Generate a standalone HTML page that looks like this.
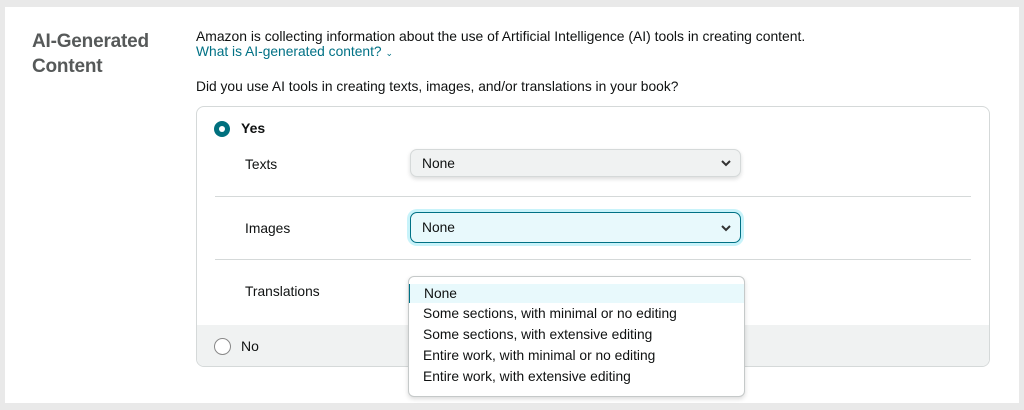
<!DOCTYPE html>
<html><head><style>
body{margin:0;width:1024px;height:410px;background:#e9e9e9;font-family:"Liberation Sans",Arial,sans-serif;color:#0f1111;position:relative;overflow:hidden}
.panel{position:absolute;left:5px;top:7px;width:1014px;height:396px;background:#fff}
.a{position:absolute;white-space:nowrap}
.title{left:32px;top:29px;font-size:19px;font-weight:bold;color:#565959;line-height:25px;letter-spacing:-0.2px}
.t{font-size:13.8px}
.card{position:absolute;left:196px;top:106px;width:792px;height:259px;border:1px solid #d5d9d9;border-radius:8px;background:#fff;overflow:hidden}
.no{position:absolute;left:0;top:218px;width:100%;height:42px;background:#f0f2f2}
.sel{position:absolute;left:213px;width:331px;height:28px;border:1px solid #d5d9d9;border-radius:7px;background:#f0f2f2;box-shadow:0 2px 4px rgba(15,17,17,.15);font-size:13.8px;line-height:28px;padding-left:11px;box-sizing:border-box}
.sel svg{position:absolute;right:9px;top:10px}
.hr{position:absolute;left:18px;width:756px;height:1px;background:#d5d9d9}
.dd{position:absolute;left:408px;top:276px;width:335px;height:119px;border:1px solid #c5c9c9;border-radius:6px;background:#fff;box-shadow:0 2px 5px rgba(0,0,0,.15);font-size:13.8px;overflow:hidden}
.dd div{height:21px;line-height:21px;padding-left:14px}
</style></head><body>
<div class="panel"></div>
<div class="a title">AI-Generated<br>Content</div>
<div class="a t" style="left:196px;top:28px;font-size:13.9px">Amazon is collecting information about the use of Artificial Intelligence (AI) tools in creating content.</div>
<div class="a t" style="left:196px;top:44px;color:#007185">What is AI-generated content? <span style="font-size:9px">&#8964;</span></div>
<div class="a t" style="left:196px;top:79px">Did you use AI tools in creating texts, images, and/or translations in your book?</div>
<div class="card">
 <div class="no"></div>
 <div class="a" style="left:17px;top:14px;width:16px;height:16px;border-radius:50%;background:#00707e"></div>
 <div class="a" style="left:22px;top:19px;width:6px;height:6px;border-radius:50%;background:#fff"></div>
 <div class="a" style="left:44px;top:13px;font-size:14px;font-weight:bold">Yes</div>
 <div class="a t" style="left:48px;top:50px">Texts</div>
 <div class="sel" style="top:42px">None<svg width="10" height="7"><path d="M1 1l4 4 4-4" stroke="#333" stroke-width="2" fill="none"/></svg></div>
 <div class="hr" style="top:89px"></div>
 <div class="a t" style="left:48px;top:114px">Images</div>
 <div class="sel" style="top:105px;height:31px;line-height:29px;background:#e8f9fc;border:1px solid #007185;box-shadow:0 0 0 3px #c8f3fa">None<svg width="10" height="7" style="top:12px"><path d="M1 1l4 4 4-4" stroke="#333" stroke-width="2" fill="none"/></svg></div>
 <div class="hr" style="top:152px"></div>
 <div class="a t" style="left:48px;top:177px">Translations</div>
 <div class="a" style="left:17px;top:231px;width:15px;height:15px;border-radius:50%;border:1px solid #888;background:#fff"></div>
 <div class="a" style="left:44px;top:231px;font-size:14px">No</div>
</div>
<div class="dd">
 <div style="margin-top:7px;background:#e8f9fc;border-left:1px solid #007185;height:19px;line-height:19px">None</div>
 <div>Some sections, with minimal or no editing</div>
 <div>Some sections, with extensive editing</div>
 <div>Entire work, with minimal or no editing</div>
 <div>Entire work, with extensive editing</div>
</div>
</body></html>
